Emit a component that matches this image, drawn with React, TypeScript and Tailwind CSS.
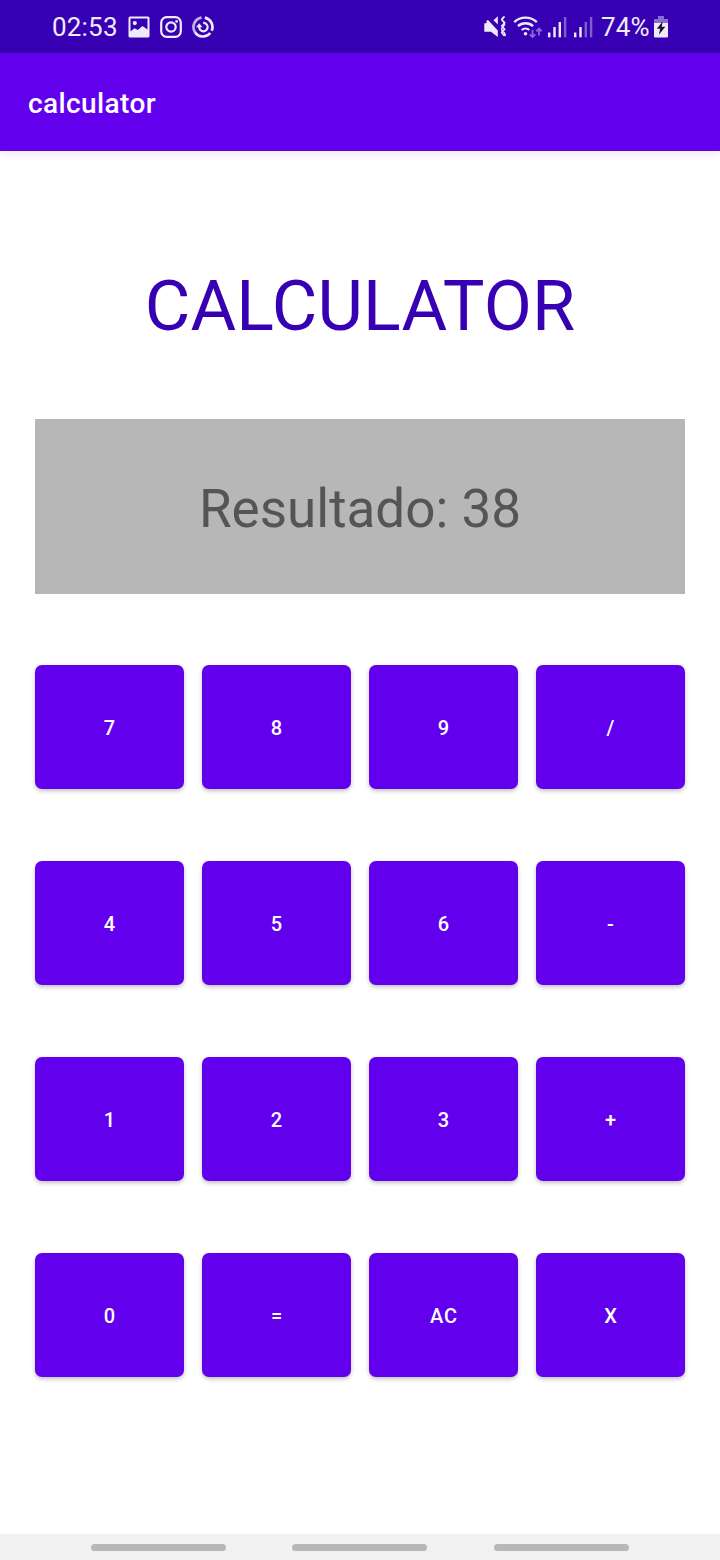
import React from 'react';

const keys = ['7', '8', '9', '/', '4', '5', '6', '-', '1', '2', '3', '+', '0', '=', 'AC', 'X'];

function PictureIcon() {
  return (
    <svg width="22" height="22" viewBox="0 0 22 22" fill="currentColor">
      <path
        fillRule="evenodd"
        d="M2 .5h18A1.500 1.500 0 0 1 21.500 2v18a1.500 1.500 0 0 1-1.500 1.500H2A1.500 1.500 0 0 1 .5 20V2A1.500 1.500 0 0 1 2 .5zM2.500 2.500v13l4-3.200 3.300 1.700 4.700-4 5 3.500v-11zM6.800 5a2.100 2.100 0 1 1 0 4.200 2.100 2.100 0 0 1 0-4.200z"
      />
    </svg>
  );
}

function CameraIcon() {
  return (
    <svg width="22" height="22" viewBox="0 0 22 22" fill="none" stroke="currentColor" strokeWidth="2.200">
      <rect x="1.200" y="1.200" width="19.600" height="19.600" rx="5.500" />
      <circle cx="11" cy="11" r="4.700" />
      <circle cx="16.600" cy="5.400" r="1.400" fill="currentColor" stroke="none" />
    </svg>
  );
}

function SwirlIcon() {
  return (
    <svg width="22" height="22" viewBox="0 0 22 22" fill="none" stroke="currentColor" strokeWidth="2.700">
      <path d="M12.800 1.700A9.500 9.500 0 0 1 19.700 14.800" />
      <path d="M18.300 17A9.500 9.500 0 0 1 3 16.200" />
      <path d="M3 16.200A9.500 9.500 0 0 1 9.600 1.700" opacity=".75" />
      <path d="M11.200 6.900A4.200 4.200 0 1 1 7.200 11" strokeWidth="2.200" />
      <path d="M4 11.200l3.200-4 3.400 4z" fill="currentColor" stroke="none" />
    </svg>
  );
}

function MuteVibrateIcon() {
  return (
    <svg width="22" height="24" viewBox="0 0 22 24" fill="currentColor">
      <path d="M.3 8.200h2.200V5.800l1.500-.8L13.800 15.500V22L7 16.800H.3zM9.500 5.300l4.300-4v8.200z" />
      <path
        d="M20.600 1.500q-4.400 2.500-1.500 5 2.900 2.500 0 5-2.900 2.500 0 5 2.900 2.500 1.500 4.500M20.300 1.800l-2.600 2.800 3 3.200-3 3.200 3 3.200-3 3.200 2.800 3.600"
        stroke="currentColor"
        strokeWidth="1.600"
        strokeLinejoin="round"
        fill="none"
      />
    </svg>
  );
}

function WifiIcon() {
  return (
    <svg width="29" height="24" viewBox="0 0 29 24" fill="none" stroke="currentColor" strokeWidth="2.300">
      <path d="M1.200 7.200a16.500 16.500 0 0 1 22.600 0" />
      <path d="M4.900 11.200a11.200 11.200 0 0 1 15.200 0" />
      <path d="M8.700 15a5.800 5.800 0 0 1 7.600 0" />
      <circle cx="12.500" cy="18.700" r="1.800" fill="currentColor" stroke="none" />
      <g opacity=".45" strokeWidth="1.800">
        <path d="M19.500 15v7M16.700 19.300l2.800 2.800 2.800-2.800M26 20.500v-7M23.200 16.300l2.800-2.800 2.800 2.800" />
      </g>
    </svg>
  );
}

function SignalIcon({ weak = false }: { weak?: boolean }) {
  return (
    <svg width="19" height="22" viewBox="0 0 19 22" fill="currentColor">
      <rect x="0" y="16.500" width="2.400" height="4.800" />
      <rect x="5.300" y="11" width="2.400" height="10.300" />
      <rect x="10.600" y="6" width="2.400" height="15.300" opacity={weak ? 0.4 : 1} />
      <rect x="15.900" y="1" width="2.400" height="20.300" opacity=".4" />
    </svg>
  );
}

function BatteryIcon() {
  return (
    <svg width="14" height="22" viewBox="0 0 14 22" fill="currentColor">
      <path d="M4 0h6v3h4v4H0V3h4z" opacity=".45" />
      <path d="M0 7h14v13.500a1 1 0 0 1-1 1H1a1 1 0 0 1-1-1z" />
      <path d="M8.800 5.200L2.800 12.700h3.400L4.900 18.700l6.400-8H7.600z" fill="#16121f" />
    </svg>
  );
}

function StatusBar() {
  return (
    <header className="flex h-[53px] items-center justify-between bg-[#3700b3] px-[52px] text-[#f0ebfa]">
      <div className="flex items-center gap-[10px]">
        <span className="w-[66px] text-[26px] leading-none tracking-[0.2px]">02:53</span>
        <PictureIcon />
        <CameraIcon />
        <SwirlIcon />
      </div>
      <div className="flex items-center">
        <MuteVibrateIcon />
        <span className="ml-[7px] flex"><WifiIcon /></span>
        <span className="ml-[6px] flex"><SignalIcon /></span>
        <span className="ml-[7px] flex"><SignalIcon weak /></span>
        <span className="ml-[8px] w-[53px] text-[26px] leading-none tracking-[0.2px]">74%</span>
        <BatteryIcon />
      </div>
    </header>
  );
}

export default function App() {
  return (
    <div className="flex h-[1560px] w-[720px] flex-col bg-white font-['Roboto',sans-serif]">
      <StatusBar />
      <div className="flex h-[98px] items-center bg-[#6200ee] pt-[3px] pl-7 text-[28px] font-medium tracking-[0.4px] text-white shadow-[0_2px_8px_rgba(0,0,0,0.1)]">
        calculator
      </div>
      <main className="flex flex-1 flex-col px-[35px]">
        <h1 className="mt-[100px] text-center text-[70px] leading-[110px] tracking-[0.1px] text-[#3700b3]">CALCULATOR</h1>
        <div className="mt-[58px] flex h-[175px] items-center justify-center bg-[#b7b7b7] pt-[7px] text-[53px] text-[#555]">
          Resultado: 38
        </div>
        <div className="mt-[71px] grid grid-cols-4 gap-x-[18px] gap-y-[72px]">
          {keys.map((k) => (
            <button
              key={k}
              className="h-[124px] rounded-[7px] bg-[#6200ee] pt-[2px] pl-[1px] text-[20px] font-medium tracking-[1px] text-white shadow-[0_2px_4px_rgba(0,0,0,0.25)]"
            >
              {k}
            </button>
          ))}
        </div>
      </main>
      <nav className="flex h-[26px] items-center bg-[#f1f1f1] pl-[91px]">
        <span className="h-[7px] w-[135px] rounded-full bg-[#b7b7b7]" />
        <span className="ml-[66px] h-[7px] w-[135px] rounded-full bg-[#b7b7b7]" />
        <span className="ml-[67px] h-[7px] w-[135px] rounded-full bg-[#b7b7b7]" />
      </nav>
    </div>
  );
}
